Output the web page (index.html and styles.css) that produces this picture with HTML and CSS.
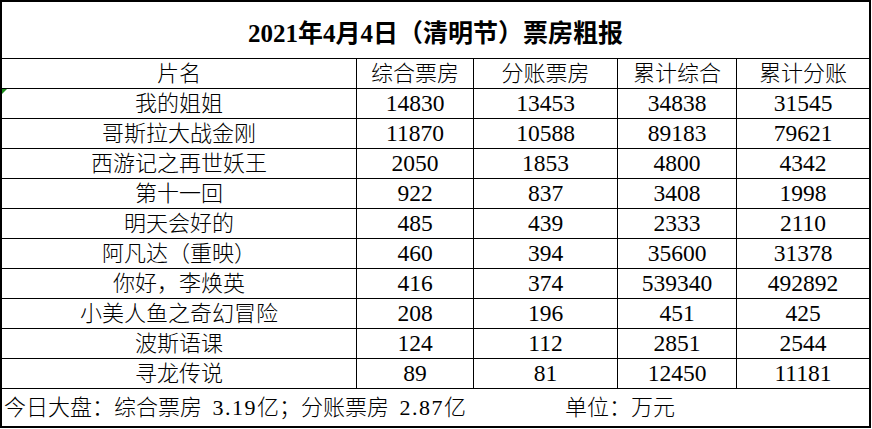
FILE: index.html
```
<!DOCTYPE html>
<html lang="zh-CN">
<head>
<meta charset="utf-8">
<title>2021年4月4日（清明节）票房粗报</title>
<link rel="stylesheet" href="styles.css">
</head>
<body>
<div class="sheet">
  <div class="title">2021年4月4日（清明节）票房粗报</div>
  <div class="row head">
    <div class="cell">片名</div>
    <div class="cell">综合票房</div>
    <div class="cell">分账票房</div>
    <div class="cell">累计综合</div>
    <div class="cell">累计分账</div>
  </div>
  <div class="row">
    <div class="cell name flagged">我的姐姐</div>
    <div class="cell">14830</div>
    <div class="cell">13453</div>
    <div class="cell">34838</div>
    <div class="cell">31545</div>
  </div>
  <div class="row">
    <div class="cell name">哥斯拉大战金刚</div>
    <div class="cell">11870</div>
    <div class="cell">10588</div>
    <div class="cell">89183</div>
    <div class="cell">79621</div>
  </div>
  <div class="row">
    <div class="cell name">西游记之再世妖王</div>
    <div class="cell">2050</div>
    <div class="cell">1853</div>
    <div class="cell">4800</div>
    <div class="cell">4342</div>
  </div>
  <div class="row">
    <div class="cell name">第十一回</div>
    <div class="cell">922</div>
    <div class="cell">837</div>
    <div class="cell">3408</div>
    <div class="cell">1998</div>
  </div>
  <div class="row">
    <div class="cell name">明天会好的</div>
    <div class="cell">485</div>
    <div class="cell">439</div>
    <div class="cell">2333</div>
    <div class="cell">2110</div>
  </div>
  <div class="row">
    <div class="cell name">阿凡达（重映）</div>
    <div class="cell">460</div>
    <div class="cell">394</div>
    <div class="cell">35600</div>
    <div class="cell">31378</div>
  </div>
  <div class="row">
    <div class="cell name">你好，李焕英</div>
    <div class="cell">416</div>
    <div class="cell">374</div>
    <div class="cell">539340</div>
    <div class="cell">492892</div>
  </div>
  <div class="row">
    <div class="cell name">小美人鱼之奇幻冒险</div>
    <div class="cell">208</div>
    <div class="cell">196</div>
    <div class="cell">451</div>
    <div class="cell">425</div>
  </div>
  <div class="row">
    <div class="cell name">波斯语课</div>
    <div class="cell">124</div>
    <div class="cell">112</div>
    <div class="cell">2851</div>
    <div class="cell">2544</div>
  </div>
  <div class="row">
    <div class="cell name">寻龙传说</div>
    <div class="cell">89</div>
    <div class="cell">81</div>
    <div class="cell">12450</div>
    <div class="cell">11181</div>
  </div>
  <div class="footer">
    <span class="total">今日大盘：综合票房 <span class="fnum">3.19</span>亿；分账票房 <span class="fnum">2.87</span>亿</span>
    <span class="unit">单位：万元</span>
  </div>
</div>
</body>
</html>
```
FILE: styles.css
```
html, body {
  margin: 0;
  padding: 0;
  background: #ffffff;
}

body {
  font-family: "Liberation Serif", "Noto Sans CJK SC", serif;
  font-weight: 300;
  color: #000000;
}

.sheet {
  width: 871px;
  height: 428px;
  box-sizing: border-box;
  border: 2px solid #000000;
  display: flex;
  flex-direction: column;
}

.title {
  height: 57px;
  box-sizing: border-box;
  border-bottom: 1px solid #000000;
  display: flex;
  align-items: center;
  justify-content: center;
  font-size: 25px;
  font-weight: bold;
  padding-top: 2px;
}

.row {
  height: 30px;
  box-sizing: border-box;
  border-bottom: 1px solid #000000;
  display: grid;
  grid-template-columns: 355px 117px 144px 119px 132px;
}

.cell {
  position: relative;
  box-sizing: border-box;
  border-right: 1px solid #000000;
  display: flex;
  align-items: center;
  justify-content: center;
  font-size: 23.5px;
  line-height: 1;
  white-space: nowrap;
  padding-top: 1px;
}

.head .cell,
.cell.name {
  font-size: 22px;
  padding-top: 0;
}

.cell:last-child {
  border-right: none;
}

.flagged::before {
  content: "";
  position: absolute;
  left: 0;
  top: 0;
  width: 0;
  height: 0;
  border-top: 5px solid #1a8a1a;
  border-right: 5px solid transparent;
}

.footer {
  flex: 1;
  display: grid;
  grid-template-columns: 561px auto;
  align-items: center;
  font-size: 22px;
  line-height: 1;
  white-space: pre;
  padding-left: 2px;
  word-spacing: 5px;
}

.fnum {
  letter-spacing: 1.5px;
  word-spacing: 0;
}
```
